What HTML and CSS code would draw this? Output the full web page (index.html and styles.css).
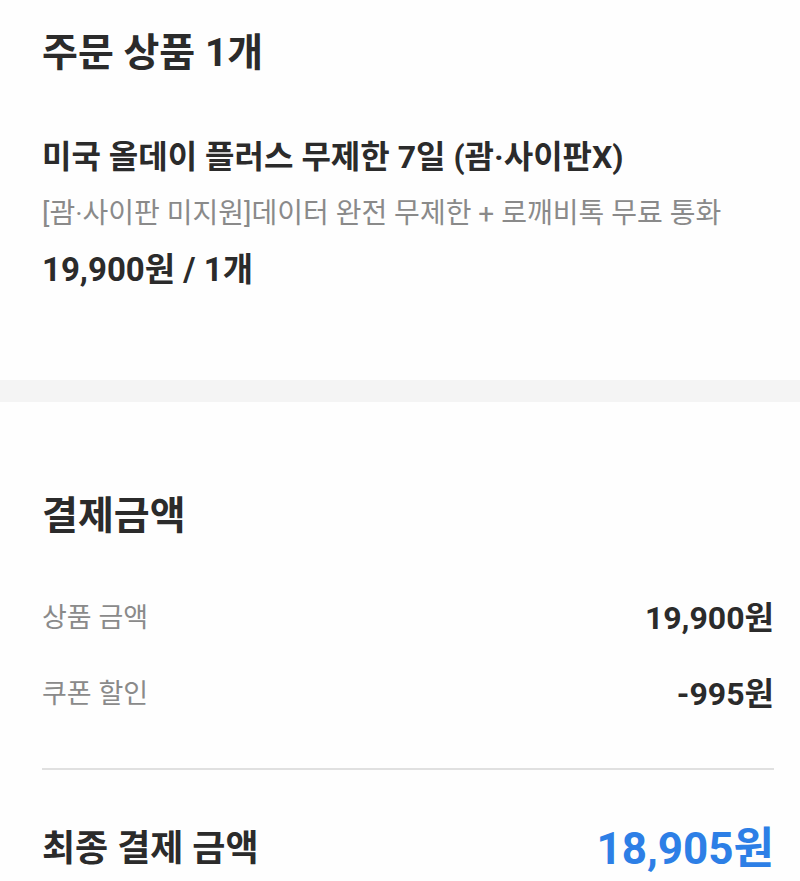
FILE: index.html
```html
<!doctype html>
<html lang="ko">
  <head>
    <meta charset="utf-8">
    <title>주문 상품</title>
    <link rel="stylesheet" href="styles.css">
  </head>
  <body>
    <div class="section order">
      <h2 class="heading">주문 상품 1개</h2>
      <p class="item-name">미국 올데이 플러스 무제한 7일 (괌·사이판X)</p>
      <p class="item-desc">[괌·사이판 미지원]데이터 완전 무제한 + 로깨비톡 무료 통화</p>
      <p class="item-price">19,900원 / 1개</p>
    </div>

    <div class="band"></div>

    <div class="section pay">
      <h2 class="heading">결제금액</h2>
      <div class="row">
        <span class="label">상품 금액</span>
        <span class="value">19,900원</span>
      </div>
      <div class="row">
        <span class="label">쿠폰 할인</span>
        <span class="value">-995원</span>
      </div>
      <div class="divider"></div>
      <div class="row total">
        <span class="total-label">최종 결제 금액</span>
        <span class="total-value">18,905원</span>
      </div>
    </div>
  </body>
</html>
```

FILE: styles.css
```css
body {
  margin: 0;
  background-color: #fefefe;
  font-family: Roboto, "Noto Sans CJK KR", sans-serif;
  color: #2b2b2b;
}

p, h2 {
  margin: 0;
}

.section {
  padding: 0 26px 0 42px;
}

.order {
  padding-top: 28px;
  padding-bottom: 88px;
}

.heading {
  font-size: 39px;
  font-weight: 700;
  line-height: 50px;
}

.item-name {
  margin-top: 57px;
  font-size: 32px;
  font-weight: 700;
  line-height: 44px;
}

.item-desc {
  margin-top: 15px;
  font-size: 28px;
  color: #8a8a8a;
  line-height: 40px;
}

.item-price {
  margin-top: 14px;
  font-size: 33px;
  font-weight: 700;
  line-height: 44px;
}

.band {
  height: 22px;
  background-color: #f4f4f4;
}

.pay {
  padding-top: 89px;
}

.pay .heading {
  margin-bottom: 57px;
}

.row {
  display: flex;
  justify-content: space-between;
  align-items: center;
}

.row + .row {
  margin-top: 36px;
}

.label {
  font-size: 27px;
  color: #8a8a8a;
  line-height: 40px;
}

.value {
  font-size: 32px;
  font-weight: 700;
  line-height: 40px;
}

.divider {
  height: 2px;
  background-color: #e0e0e0;
  margin-top: 54px;
}

.row.total {
  margin-top: 51px;
}

.total-label {
  font-size: 36px;
  font-weight: 700;
  line-height: 56px;
}

.total-value {
  font-size: 44px;
  font-weight: 700;
  color: #2d7fe6;
  line-height: 56px;
}
```
